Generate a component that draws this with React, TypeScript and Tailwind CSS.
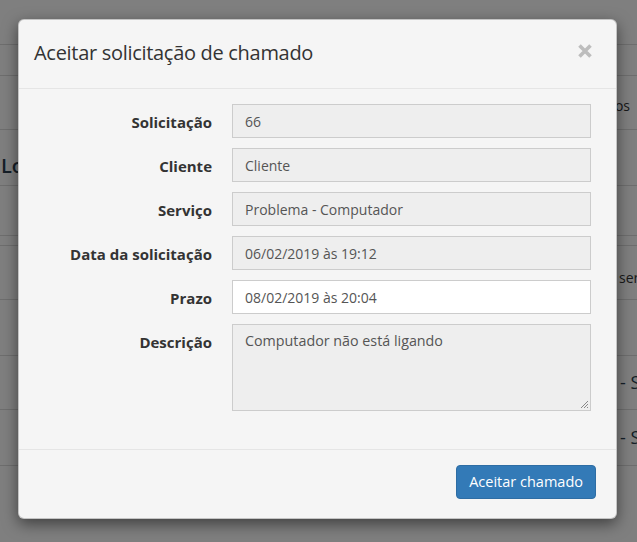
import React from "react";

const rows = [
  { label: "Solicitação", value: "66", readOnly: true },
  { label: "Cliente", value: "Cliente", readOnly: true },
  { label: "Serviço", value: "Problema - Computador", readOnly: true },
  { label: "Data da solicitação", value: "06/02/2019 às 19:12", readOnly: true },
  { label: "Prazo", value: "08/02/2019 às 20:04", readOnly: false },
];

const BackgroundPage: React.FC = () => (
  <div className="flex flex-col bg-white text-[#333] text-[14px]">
    <div className="h-[45px] border-b border-[#ddd]" />
    <div className="h-[31px] border-b border-[#ddd]" />
    <div className="h-[54px] border-b border-[#ddd] flex items-center justify-end pr-[7px]">
      <span className="mt-[6px]">Todos</span>
    </div>
    <div className="h-[56px] border-b border-[#ddd] flex items-center">
      <span className="text-[20px] font-semibold text-[#2c3e50] ml-[1px] mt-[16px]">Lo</span>
    </div>
    <div className="h-[50px] border-b border-[#ddd]" />
    <div className="h-[10px] border-b border-[#ddd]" />
    <div className="h-[54px] border-b border-[#ddd] flex items-center justify-start pl-[619px]">
      <span className="whitespace-nowrap mt-[10px]">serviço</span>
    </div>
    <div className="h-[56px] border-b border-[#ddd]" />
    <div className="h-[54px] border-b border-[#ddd] flex items-center justify-start pl-[620px]">
      <span className="text-[18px] text-[#2c3e50] whitespace-nowrap">- S</span>
    </div>
    <div className="h-[56px] border-b border-[#ddd] flex items-center justify-start pl-[620px]">
      <span className="text-[18px] text-[#2c3e50] whitespace-nowrap">- S</span>
    </div>
    <div className="h-[90px]" />
  </div>
);

export default function App() {
  return (
    <div
      className="relative w-[637px] h-[542px] overflow-hidden"
      style={{ fontFamily: '"Open Sans", "Noto Sans", sans-serif' }}
    >
      <BackgroundPage />
      <div className="absolute inset-0 bg-black/50" />

      <div className="absolute left-[18px] top-[19px] w-[599px] rounded-[6px] bg-[#f5f5f5] shadow-[0_5px_15px_rgba(0,0,0,0.5)] border border-black/20">
        <div className="h-[69px] flex items-center justify-between px-[15px] border-b border-[#e5e5e5]">
          <h4 className="text-[20px] tracking-[-0.3px] text-[#333] leading-none -mt-[2px]">
            Aceitar solicitação de chamado
          </h4>
          <button className="mr-[8px] -mt-[6px]">
            <svg width="16" height="16" viewBox="0 0 16 16">
              <path d="M2.5 2.5 L13.5 13.5 M13.5 2.5 L2.5 13.5" stroke="#bdbdbd" strokeWidth="3.6" />
            </svg>
          </button>
        </div>

        <div className="px-[15px] pt-[15px] pb-[38px] flex flex-col gap-[10px]">
          {rows.map((r) => (
            <div key={r.label} className="flex items-start">
              <label className="w-[178px] shrink-0 text-right font-bold text-[15px] text-[#333] pt-[8px] leading-[20px]">
                {r.label}
              </label>
              <div className="ml-[20px] w-[359px]">
                <div
                  className={
                    "h-[34px] border border-[#ccc] px-[12px] flex items-center text-[14px] text-[#555] " +
                    (r.readOnly ? "bg-[#eee]" : "bg-white")
                  }
                >
                  {r.value}
                </div>
              </div>
            </div>
          ))}
          <div className="flex items-start">
            <label className="w-[178px] shrink-0 text-right font-bold text-[15px] text-[#333] pt-[8px] leading-[20px]">
              Descrição
            </label>
            <div className="ml-[20px] w-[359px] relative">
              <div className="h-[87px] border border-[#ccc] bg-[#eee] px-[12px] pt-[6px] text-[14.3px] leading-[20px] text-[#555]">
                Computador não está ligando
              </div>
              <svg
                className="absolute right-[2px] bottom-[2px]"
                width="10"
                height="10"
                viewBox="0 0 10 10"
              >
                <path d="M9 2 L2 9 M9 5 L5 9 M9 8 L8 9" stroke="#888" strokeWidth="1" />
              </svg>
            </div>
          </div>
        </div>

        <div className="h-[69px] border-t border-[#e5e5e5] flex items-start justify-end px-[20px] pt-[15px]">
          <button className="h-[34px] px-[12px] rounded-[4px] bg-[#337ab7] border border-[#2e6da4] text-white text-[14.5px]">
            Aceitar chamado
          </button>
        </div>
      </div>
    </div>
  );
}
